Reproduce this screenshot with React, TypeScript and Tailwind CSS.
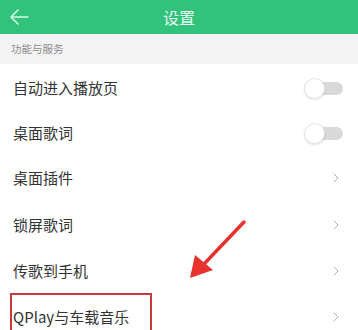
import { ChevronRight } from "lucide-react";

type Row = { label: string; kind: "toggle" | "link"; h: string };

const rows: Row[] = [
  { label: "自动进入播放页", kind: "toggle", h: "h-[48px]" },
  { label: "桌面歌词", kind: "toggle", h: "h-[42px]" },
  { label: "桌面插件", kind: "link", h: "h-[48px]" },
  { label: "锁屏歌词", kind: "link", h: "h-[46px]" },
  { label: "传歌到手机", kind: "link", h: "h-[46px]" },
  { label: "QPlay与车载音乐", kind: "link", h: "h-[46px]" },
];

const Toggle = () => (
  <div className="relative w-[40px] h-[22px] flex items-center">
    <div className="absolute left-[8px] right-[1px] h-[13px] rounded-full bg-[#d9d9d9]" />
    <div className="absolute left-0 w-[21px] h-[21px] rounded-full bg-white border border-[#e4e4e4] shadow-[0_1px_2px_rgba(0,0,0,0.12)]" />
  </div>
);

const App = () => {
  return (
    <div
      className="relative w-[358px] h-[330px] overflow-hidden bg-white"
      style={{ fontFamily: '"Noto Sans CJK SC", "Noto Sans", sans-serif' }}
    >
      <header className="relative h-[34px] bg-[#31c27c] flex items-center justify-center">
        <svg
          className="absolute left-[9px] top-[8px]"
          width="20"
          height="18"
          viewBox="0 0 20 18"
          fill="none"
          stroke="#d8f5e6"
          strokeWidth="1.6"
          strokeLinecap="round"
          strokeLinejoin="round"
        >
          <path d="M19 9H2M9 2L2 9l7 7" />
        </svg>
        <span className="text-[16px] text-[#eafaf1] leading-none">设置</span>
      </header>

      <div className="h-[30px] bg-[#f3f3f3] flex items-center px-[11px]">
        <span className="text-[10.5px] text-[#8a8a8a]">功能与服务</span>
      </div>

      <div className="flex flex-col">
        {rows.map((r) => (
          <div
            key={r.label}
            className={`flex items-center justify-between pl-[13px] pr-[14px] ${r.h}`}
          >
            <span className="text-[15px] text-[#333333]">{r.label}</span>
            {r.kind === "toggle" ? (
              <Toggle />
            ) : (
              <ChevronRight className="w-[16px] h-[16px] text-[#a8a8a8]" strokeWidth={1.4} />
            )}
          </div>
        ))}
      </div>

      {/* annotation: red arrow */}
      <svg
        className="absolute left-[180px] top-[212px]"
        width="75"
        height="75"
        viewBox="0 0 75 75"
      >
        <path d="M64 10 L24 52" stroke="#e8322e" strokeWidth="3.5" strokeLinecap="round" />
        <polygon points="10,66 15,43 33,58" fill="#e8322e" />
      </svg>

      {/* annotation: red box */}
      <div className="absolute left-[10px] top-[293px] w-[142px] h-[60px] border-2 border-[#c73a3f]" />
    </div>
  );
};

export default App;
